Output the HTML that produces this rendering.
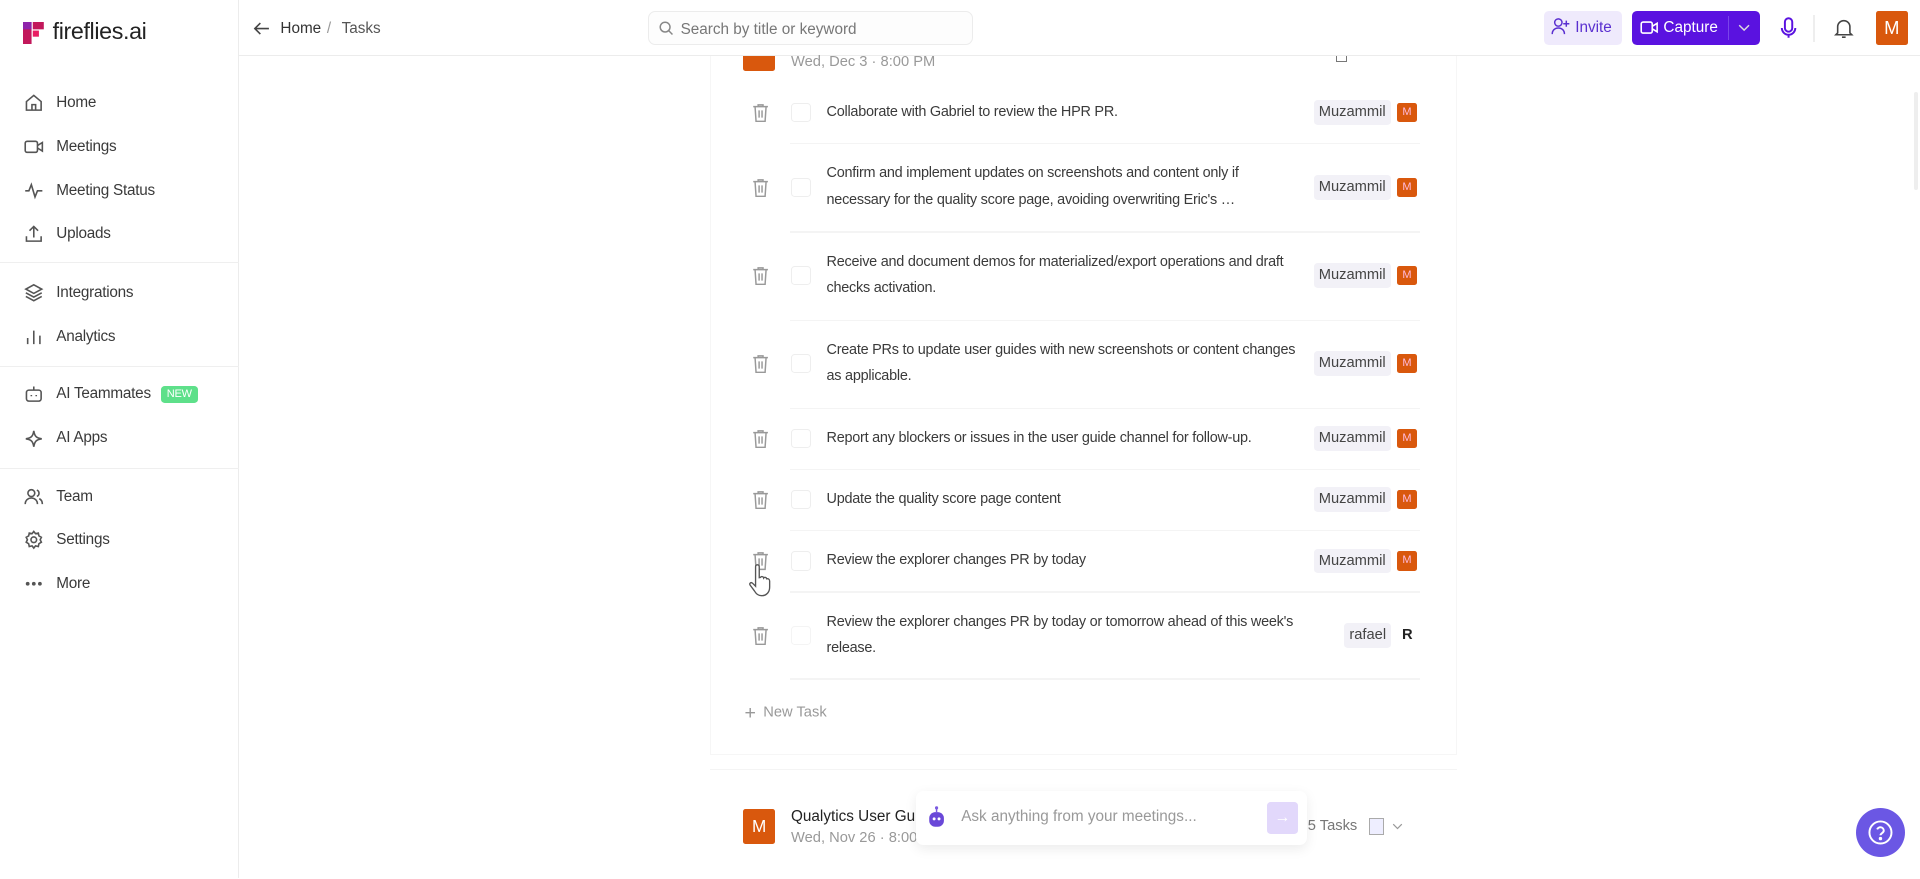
<!DOCTYPE html>
<html><head><meta charset="utf-8">
<style>
html{zoom:1.22449}
*{box-sizing:border-box;margin:0;padding:0}
body{width:1568px;height:717px;overflow:hidden;background:#fff;font-family:"Liberation Sans",sans-serif;color:#333;position:relative;font-size:12px}
.abs{position:absolute}
.side{left:0;top:0;width:195px;height:717px;border-right:1px solid #ececec;background:#fff}
.nav{position:absolute;left:20px;display:flex;align-items:center;font-size:12.5px;color:#3a3a3a;letter-spacing:-.2px}
.nav svg{width:16px;height:16px;margin-right:10px;stroke:#555;fill:none;stroke-width:1.3}
.div{position:absolute;left:0;width:195px;height:1px;background:#efefef}
.hdr{left:195px;top:0;width:1373px;height:46px;border-bottom:1px solid #ececec;background:#fff}
.card{left:580px;top:46px;width:610px;height:571px;background:#fff;border:1px solid #f6f6f6;border-top:none}
.row{position:absolute;left:608px;width:552px;height:0}
.row .txt{position:absolute;left:67px;width:385px;font-size:11.8px;line-height:21.5px;color:#3a3a3a;letter-spacing:-.2px}
.trash{position:absolute;left:6px;top:-8px;width:14px;height:16px}
.cb{position:absolute;left:38px;top:-8px;width:16px;height:16px;border:1px solid #eee;border-radius:3px}
.chip{position:absolute;left:465px;top:-10px;height:20px;line-height:20px;padding:0 4px;background:#f2f1f7;border-radius:3px;font-size:12px;color:#444}
.mb{position:absolute;left:533px;top:-8px;width:16px;height:16px;background:#d9580d;color:#fbd;border-radius:2px;font-size:9px;text-align:center;line-height:16px}
.sep{position:absolute;left:645px;width:515px;height:1px;background:#f4f4f4}
</style></head><body>
<div class="abs side">
  <div class="abs" style="left:19px;top:18px;width:18px;height:18px">
    <svg width="18" height="18" viewBox="0 0 18 18"><rect x="0" y="0" width="7" height="18" fill="#c2185b"/><rect x="8" y="0" width="9" height="6" fill="#c2185b"/><rect x="8" y="7" width="5" height="5" fill="#e91e63"/><rect x="0" y="0" width="7" height="6" fill="#8e24aa"/></svg>
  </div>
  <div class="abs" style="left:43px;top:15px;font-size:19px;color:#222;letter-spacing:-.3px">fireflies.ai</div>
  <div class="nav" style="top:76px"><svg viewBox="0 0 16 16"><path d="M2 7l6-5 6 5v7H2z"/><path d="M6.5 14V9.5h3V14"/></svg>Home</div>
  <div class="nav" style="top:112px"><svg viewBox="0 0 16 16"><rect x="1" y="3.5" width="10" height="9" rx="1.5"/><path d="M11 7l4-2.5v7L11 9"/></svg>Meetings</div>
  <div class="nav" style="top:148px"><svg viewBox="0 0 16 16"><path d="M1 8h3l2-5 3 10 2-5h4"/></svg>Meeting Status</div>
  <div class="nav" style="top:183px"><svg viewBox="0 0 16 16"><path d="M8 11V2M4.5 5.5L8 2l3.5 3.5M2 10v4h12v-4"/></svg>Uploads</div>
  <div class="div" style="top:214px"></div>
  <div class="nav" style="top:231px"><svg viewBox="0 0 16 16"><path d="M8 1.5l6.5 3.5L8 8.5 1.5 5z"/><path d="M1.5 8L8 11.5 14.5 8M1.5 11L8 14.5 14.5 11"/></svg>Integrations</div>
  <div class="nav" style="top:267px"><svg viewBox="0 0 16 16"><path d="M3 14V9M8 14V3M13 14V7"/></svg>Analytics</div>
  <div class="div" style="top:299px"></div>
  <div class="nav" style="top:314px"><svg viewBox="0 0 16 16"><rect x="2" y="5" width="12" height="9" rx="2"/><path d="M8 5V2M6 9v1M10 9v1"/></svg>AI Teammates<span style="margin-left:8px;background:#5ee08a;color:#fff;font-size:9px;padding:2px 5px;border-radius:3px">NEW</span></div>
  <div class="nav" style="top:350px"><svg viewBox="0 0 16 16"><path d="M8 1.5C8.7 6 10 7.3 14.5 8 10 8.7 8.7 10 8 14.5 7.3 10 6 8.7 1.5 8 6 7.3 7.3 6 8 1.5z"/></svg>AI Apps</div>
  <div class="div" style="top:382px"></div>
  <div class="nav" style="top:398px"><svg viewBox="0 0 16 16"><circle cx="6" cy="5" r="2.8"/><path d="M1 14c0-3 2.2-5 5-5s5 2 5 5M10.5 2.5a2.8 2.8 0 010 5.2M12.5 9.5c1.5.8 2.5 2.5 2.5 4.5"/></svg>Team</div>
  <div class="nav" style="top:433px"><svg viewBox="0 0 16 16"><circle cx="8" cy="8" r="2.3"/><path d="M8 1.2l1.4 1.8 2.3-.5.5 2.3 2 1.2-1 2 1 2-2 1.2-.5 2.3-2.3-.5L8 14.8 6.6 13l-2.3.5-.5-2.3-2-1.2 1-2-1-2 2-1.2.5-2.3 2.3.5z"/></svg>Settings</div>
  <div class="nav" style="top:469px"><svg viewBox="0 0 16 16"><circle cx="3" cy="8" r=".9" fill="#555"/><circle cx="8" cy="8" r=".9" fill="#555"/><circle cx="13" cy="8" r=".9" fill="#555"/></svg>More</div>
</div>

<div class="abs hdr">
  <svg class="abs" style="left:12px;top:16px" width="14" height="14" viewBox="0 0 14 14" fill="none" stroke="#444" stroke-width="1.3"><path d="M13 7H1.5M6 2.5L1.5 7 6 11.5"/></svg>
  <div class="abs" style="left:34px;top:16px;font-size:12.5px;color:#333">Home</div>
  <div class="abs" style="left:72px;top:16px;font-size:12.5px;color:#999">/</div>
  <div class="abs" style="left:84px;top:16px;font-size:12.5px;color:#555">Tasks</div>
  <div class="abs" style="left:334px;top:9px;width:266px;height:28px;border:1px solid #ececec;border-radius:6px;background:#fdfdfd">
    <svg class="abs" style="left:8px;top:7px" width="12" height="12" viewBox="0 0 12 12" fill="none" stroke="#888" stroke-width="1.2"><circle cx="5" cy="5" r="4"/><path d="M8 8l3 3"/></svg>
    <div class="abs" style="left:26px;top:7px;font-size:12.5px;color:#777">Search by title or keyword</div>
  </div>
  <div class="abs" style="left:1066px;top:9px;width:64px;height:28px;background:#efeafc;border-radius:4px;color:#5a2fd0;font-size:12.5px;line-height:28px;padding-left:6px">
    <svg style="vertical-align:-3px" width="16" height="15" viewBox="0 0 16 15" fill="none" stroke="#5a2fd0" stroke-width="1.2"><circle cx="6" cy="4.5" r="3"/><path d="M1 14c0-3 2-5 5-5s5 2 5 5M12.5 3v5M10 5.5h5"/></svg> Invite</div>
  <div class="abs" style="left:1138px;top:9px;width:104px;height:28px;background:#5a12e0;border-radius:4px;color:#fff;font-size:12.5px;line-height:28px;padding-left:6px">
    <svg style="vertical-align:-3px" width="16" height="14" viewBox="0 0 16 14" fill="none" stroke="#fff" stroke-width="1.3"><rect x="1" y="2.5" width="9" height="9" rx="1.5"/><path d="M10 6l4-2.5v7L10 8"/></svg> Capture
    <div class="abs" style="left:78px;top:4px;width:1px;height:20px;background:#7a44ea"></div>
    <svg class="abs" style="left:86px;top:11px" width="10" height="6" viewBox="0 0 10 6" fill="none" stroke="#ddd" stroke-width="1.2"><path d="M1 1l4 4 4-4"/></svg>
  </div>
  <svg class="abs" style="left:1259px;top:14px" width="14" height="18" viewBox="0 0 14 18" fill="none" stroke="#5a12e0" stroke-width="1.6"><rect x="4" y="1" width="6" height="11" rx="3"/><path d="M1.5 9a5.5 5.5 0 0011 0M7 14.5V17"/></svg>
  <div class="abs" style="left:1286px;top:12px;width:1px;height:22px;background:#eee"></div>
  <svg class="abs" style="left:1303px;top:14px" width="16" height="18" viewBox="0 0 16 18" fill="none" stroke="#444" stroke-width="1.3"><path d="M3 13V8a5 5 0 0110 0v5l1.5 1.5h-13zM6.5 16.5h3"/></svg>
  <div class="abs" style="left:1337px;top:9px;width:26px;height:28px;background:#d9580d;color:#fff;font-size:15px;text-align:center;line-height:28px;border-radius:2px">M</div>
</div>

<div class="abs card"></div>
<div class="abs" style="left:607px;top:46px;width:26px;height:12px;background:#d9580d;border-radius:0 0 2px 2px"></div>
<div class="abs" style="left:646px;top:44px;font-size:12px;color:#999">Wed, Dec 3 · 8:00 PM</div>
<div class="abs" style="left:1091px;top:46px;width:9px;height:5px;border:1px solid #777;border-top:none"></div>

<div class="row" style="top:92px"><svg class="trash" viewBox="0 0 14 16" fill="none" stroke="#999" stroke-width="1.2"><path d="M1 3h12M5 3V1.5h4V3M2.5 3l.8 12h7.4l.8-12M5.8 6v6M8.2 6v6"/></svg><div class="cb"></div><div class="txt" style="top:-11px">Collaborate with Gabriel to review the HPR PR.</div><div class="chip">Muzammil</div><div class="mb">M</div></div>
<div class="sep" style="top:117px"></div>
<div class="row" style="top:153px"><svg class="trash" viewBox="0 0 14 16" fill="none" stroke="#999" stroke-width="1.2"><path d="M1 3h12M5 3V1.5h4V3M2.5 3l.8 12h7.4l.8-12M5.8 6v6M8.2 6v6"/></svg><div class="cb"></div><div class="txt" style="top:-22px">Confirm and implement updates on screenshots and content only if necessary for the quality score page, avoiding overwriting Eric's …</div><div class="chip">Muzammil</div><div class="mb">M</div></div>
<div class="sep" style="top:189px"></div>
<div class="row" style="top:225px"><svg class="trash" viewBox="0 0 14 16" fill="none" stroke="#999" stroke-width="1.2"><path d="M1 3h12M5 3V1.5h4V3M2.5 3l.8 12h7.4l.8-12M5.8 6v6M8.2 6v6"/></svg><div class="cb"></div><div class="txt" style="top:-22px">Receive and document demos for materialized/export operations and draft checks activation.</div><div class="chip">Muzammil</div><div class="mb">M</div></div>
<div class="sep" style="top:261px"></div>
<div class="row" style="top:297px"><svg class="trash" viewBox="0 0 14 16" fill="none" stroke="#999" stroke-width="1.2"><path d="M1 3h12M5 3V1.5h4V3M2.5 3l.8 12h7.4l.8-12M5.8 6v6M8.2 6v6"/></svg><div class="cb"></div><div class="txt" style="top:-22px">Create PRs to update user guides with new screenshots or content changes as applicable.</div><div class="chip">Muzammil</div><div class="mb">M</div></div>
<div class="sep" style="top:333px"></div>
<div class="row" style="top:358px"><svg class="trash" viewBox="0 0 14 16" fill="none" stroke="#999" stroke-width="1.2"><path d="M1 3h12M5 3V1.5h4V3M2.5 3l.8 12h7.4l.8-12M5.8 6v6M8.2 6v6"/></svg><div class="cb"></div><div class="txt" style="top:-11px">Report any blockers or issues in the user guide channel for follow-up.</div><div class="chip">Muzammil</div><div class="mb">M</div></div>
<div class="sep" style="top:383px"></div>
<div class="row" style="top:408px"><svg class="trash" viewBox="0 0 14 16" fill="none" stroke="#999" stroke-width="1.2"><path d="M1 3h12M5 3V1.5h4V3M2.5 3l.8 12h7.4l.8-12M5.8 6v6M8.2 6v6"/></svg><div class="cb"></div><div class="txt" style="top:-11px">Update the quality score page content</div><div class="chip">Muzammil</div><div class="mb">M</div></div>
<div class="sep" style="top:433px"></div>
<div class="row" style="top:458px"><svg class="trash" viewBox="0 0 14 16" fill="none" stroke="#999" stroke-width="1.2"><path d="M1 3h12M5 3V1.5h4V3M2.5 3l.8 12h7.4l.8-12M5.8 6v6M8.2 6v6"/></svg><div class="cb"></div><div class="txt" style="top:-11px">Review the explorer changes PR by today</div><div class="chip">Muzammil</div><div class="mb">M</div></div>
<svg class="abs" style="left:610px;top:460px" width="20" height="34" viewBox="0 0 20 34" fill="#fff" stroke="#555" stroke-width="1.1"><path d="M7 3a1.5 1.5 0 013 0v9l1-.2a1.4 1.4 0 012.6.5 1.4 1.4 0 012.5.6c1.3-.3 2.4.4 2.4 1.8v5c0 4-2.5 7-6.5 7-3 0-4.5-1.5-6-4L2.5 18c-.8-1.4.8-2.6 2-1.5L7 19z"/></svg>
<div class="sep" style="top:483px"></div>
<div class="row" style="top:519px"><svg class="trash" viewBox="0 0 14 16" fill="none" stroke="#999" stroke-width="1.2"><path d="M1 3h12M5 3V1.5h4V3M2.5 3l.8 12h7.4l.8-12M5.8 6v6M8.2 6v6"/></svg><div class="cb" style="border-color:#f4f4f4"></div><div class="txt" style="top:-22px">Review the explorer changes PR by today or tomorrow ahead of this week's release.</div><div class="chip" style="left:490px">rafael</div><div class="abs" style="left:537px;top:-7px;font-size:12px;color:#222;font-weight:bold">R</div></div>
<div class="sep" style="top:554px"></div>
<div class="abs" style="left:608px;top:573px;font-size:12px;color:#999"><span style="font-size:16px;vertical-align:-2px;margin-right:6px">+</span>New Task</div>

<div class="abs" style="left:580px;top:628px;width:610px;height:90px;border-top:1px solid #f4f4f4"></div>
<div class="abs" style="left:607px;top:661px;width:26px;height:28px;background:#d9580d;color:#fff;font-size:14px;line-height:28px;text-align:center;border-radius:2px">M</div>
<div class="abs" style="left:646px;top:660px;font-size:12.5px;color:#222">Qualytics User Gu</div>
<div class="abs" style="left:646px;top:678px;font-size:12px;color:#999">Wed, Nov 26 · 8:00</div>
<div class="abs" style="left:1068px;top:668px;font-size:12px;color:#777">5 Tasks</div>
<div class="abs" style="left:1118px;top:668px;width:12px;height:14px;border:1px solid #aaa;background:#eef"></div>
<svg class="abs" style="left:1137px;top:672px" width="9" height="6" viewBox="0 0 9 6" fill="none" stroke="#999"><path d="M1 1l3.5 3.5L8 1"/></svg>

<div class="abs" style="left:748px;top:646px;width:319px;height:44px;background:#fff;border-radius:6px;box-shadow:0 3px 10px rgba(0,0,0,.08)">
  <svg class="abs" style="left:10px;top:12px" width="14" height="18" viewBox="0 0 14 18"><path d="M7 1v4" stroke="#7b5be0" stroke-width="1.2"/><circle cx="7" cy="1.5" r="1.3" fill="#7b5be0"/><rect x="1" y="5" width="12" height="12" rx="5" fill="#6a48d8"/><circle cx="5" cy="10.5" r="1.2" fill="#fff"/><circle cx="9" cy="10.5" r="1.2" fill="#fff"/></svg>
  <div class="abs" style="left:37px;top:14px;font-size:12.5px;color:#999">Ask anything from your meetings...</div>
  <div class="abs" style="left:287px;top:9px;width:25px;height:26px;background:#e2d8fb;border-radius:3px;color:#fff;text-align:center;line-height:26px;font-size:13px">→</div>
</div>

<div class="abs" style="left:1516px;top:660px;width:40px;height:40px;border-radius:50%;background:#6b57e4">
  <svg class="abs" style="left:9px;top:9px" width="22" height="22" viewBox="0 0 22 22" fill="none" stroke="#fff" stroke-width="1.6"><circle cx="11" cy="11" r="9"/><path d="M8.3 8.5a2.8 2.8 0 015.4 1c0 1.8-2.7 2.2-2.7 3.8"/><circle cx="11" cy="16" r=".6" fill="#fff"/></svg>
</div>
<div class="abs" style="left:1563px;top:75px;width:3px;height:80px;background:#eee;border-radius:2px"></div>
</body></html>
